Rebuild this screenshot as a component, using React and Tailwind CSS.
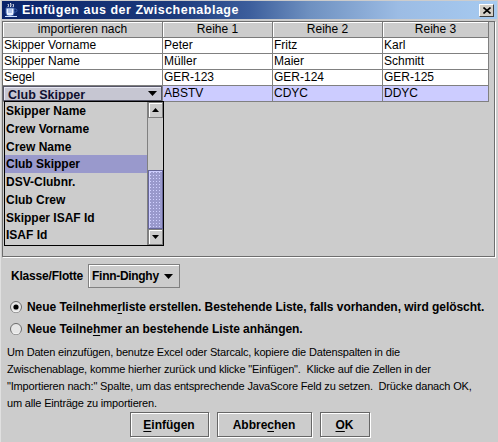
import React from "react";

const FONT = "font-['Liberation_Sans',Arial,sans-serif]";

const columns = [
  { title: "importieren nach", w: "w-[160px]" },
  { title: "Reihe 1", w: "w-[110px]" },
  { title: "Reihe 2", w: "w-[110px]" },
  { title: "Reihe 3", w: "w-[106px]" },
];

const rows = [
  ["Skipper Vorname", "Peter", "Fritz", "Karl"],
  ["Skipper Name", "Müller", "Maier", "Schmitt"],
  ["Segel", "GER-123", "GER-124", "GER-125"],
];

const listItems = [
  "Skipper Name",
  "Crew Vorname",
  "Crew Name",
  "Club Skipper",
  "DSV-Clubnr.",
  "Club Crew",
  "Skipper ISAF Id",
  "ISAF Id",
];

function DownArrow({ w = 9, h = 5 }) {
  return (
    <svg width={w} height={h} viewBox={`0 0 ${w} ${h}`}>
      <polygon points={`0,0 ${w},0 ${w / 2},${h}`} fill="#000" />
    </svg>
  );
}

function UpArrow({ w = 7, h = 4 }) {
  return (
    <svg width={w} height={h} viewBox={`0 0 ${w} ${h}`}>
      <polygon points={`0,${h} ${w},${h} ${w / 2},0`} fill="#000" />
    </svg>
  );
}

function TitleIcon() {
  return (
    <svg width="16" height="16" viewBox="0 0 16 16">
      <path d="M3 6 h8 v5 a3 3 0 0 1 -3 3 h-2 a3 3 0 0 1 -3 -3 z" fill="#e8f0ff" stroke="#3b5fa8" strokeWidth="1" />
      <path d="M11 7 h1.5 a1.5 1.5 0 0 1 0 3 h-1.5" fill="none" stroke="#3b5fa8" strokeWidth="1" />
      <path d="M5 2 q1 1.5 0 3 M7.5 1 q1 2 0 4 M10 2 q1 1.5 0 3" fill="none" stroke="#ffffff" strokeWidth="1" />
      <path d="M2 14.5 h12" stroke="#cfe0ff" strokeWidth="1" />
      <path d="M5 8 h4 M5 10 h4" stroke="#7a9ad8" strokeWidth="1" />
    </svg>
  );
}

function Radio({ checked }) {
  return (
    <svg width="12" height="12" viewBox="0 0 12 12">
      <circle cx="6" cy="6" r="5.5" fill="#e6e6e6" stroke="#6b6b6b" strokeWidth="1" />
      <path d="M2.5 9.5 a5 5 0 0 0 7 0" fill="none" stroke="#ffffff" strokeWidth="1" />
      {checked && <circle cx="6" cy="6" r="2.6" fill="#000" />}
    </svg>
  );
}

function Mn({ children }) {
  return <span className="underline underline-offset-2">{children}</span>;
}

function Button({ w, children }) {
  return (
    <button
      className={`${w} h-[25px] border border-[#666666] bg-[#cccccc] shadow-[inset_1px_1px_0_#ffffff,1px_1px_0_#ffffff] text-[12px] font-bold text-black flex items-center justify-center`}
    >
      {children}
    </button>
  );
}

export default function App() {
  return (
    <div
      className={`${FONT} relative w-[498px] h-[442px] overflow-hidden bg-[#cccccc] pt-[1px] border-l border-[#e0e0e0]`}
    >
      {/* title bar */}
      <div className="ml-[1px] mr-[1px] h-[18px] flex items-center justify-between bg-[linear-gradient(to_right,#0a246a_0%,#1c3a7c_35%,#3c5e9c_50%,#6e90c0_62%,#9cbce4_80%,#a6caf0_100%)]">
        <div className="flex items-center gap-[3px] pl-[1px]">
          <TitleIcon />
          <span className="text-[12.5px] font-bold text-white tracking-[0.5px]">
            Einfügen aus der Zwischenablage
          </span>
        </div>
        <div className="mr-[3px] w-[15px] h-[13px] bg-[#d4d0c8] border border-t-white border-l-white border-r-[#404040] border-b-[#404040] flex items-center justify-center">
          <svg width="8" height="7" viewBox="0 0 8 7">
            <path d="M0.5 0.5 L7.5 6.5 M7.5 0.5 L0.5 6.5" stroke="#000" strokeWidth="1.6" />
          </svg>
        </div>
      </div>

      {/* table scroll pane */}
      <div className="mt-[2px] ml-[1px] w-[493px] h-[236px] border border-[#6e6e6e] shadow-[1px_1px_0_#ffffff] bg-[#cccccc]">
        <div className="flex">
          {columns.map((c) => (
            <div
              key={c.title}
              className={`${c.w} h-[16px] border-r border-b border-[#7a7a7a] shadow-[inset_1px_1px_0_#ffffff] text-[12px] leading-[15px] text-center text-black`}
            >
              {c.title}
            </div>
          ))}
        </div>
        {rows.map((r) => (
          <div key={r[0]} className="flex">
            {r.map((v, i) => (
              <div
                key={i}
                className={`${columns[i].w} h-[16px] bg-white border-r border-b border-[#808080] text-[12px] leading-[15px] pl-[1px] text-black whitespace-nowrap overflow-hidden`}
              >
                {v}
              </div>
            ))}
          </div>
        ))}
        <div className="flex">
          <div className="w-[160px] h-[16px] border-r border-b border-[#808080] bg-[#cccccc]">
            <div className="h-[15px] border border-[#555566] bg-[#c6c6d2] shadow-[inset_1px_1px_0_#e8e8f4] flex items-start justify-between pl-[4px] pr-[4px] overflow-hidden">
              <span className="text-[12.5px] font-bold leading-[15px] mt-[1px] text-[#101030]">
                Club Skipper
              </span>
              <div className="mt-[4px]">
                <DownArrow />
              </div>
            </div>
          </div>
          {["ABSTV", "CDYC", "DDYC"].map((v, i) => (
            <div
              key={v}
              className={`${columns[i + 1].w} h-[16px] bg-[#ccccff] border-r border-b border-[#808080] text-[12px] leading-[15px] pl-[1px] text-black`}
            >
              {v}
            </div>
          ))}
        </div>
      </div>

      {/* dropdown popup over the table */}
      <div className="absolute left-[3px] top-[101px] w-[160px] h-[145px] border border-black bg-[#cccccc] flex">
        <div className="flex-1 overflow-hidden">
          {listItems.map((it) => (
            <div
              key={it}
              className={`h-[17.8px] flex items-center pl-[1px] text-[12px] font-bold text-black ${
                it === "Club Skipper" ? "bg-[#9999cc]" : ""
              }`}
            >
              {it}
            </div>
          ))}
        </div>
        <div className="w-[16px] flex flex-col border-l border-[#808080]">
          <div className="h-[16px] border border-[#808080] shadow-[inset_1px_1px_0_#ffffff] flex items-center justify-center">
            <UpArrow />
          </div>
          <div className="h-[52px]" />
          <div className="h-[59px] border border-[#666699] bg-[#9999cc] bg-[radial-gradient(circle,#d0d0ff_0.7px,transparent_1px)] bg-[length:3px_3px] shadow-[inset_1px_1px_0_#ccccff]" />
          <div className="flex-1 border border-[#808080] shadow-[inset_1px_1px_0_#ffffff] flex items-center justify-center">
            <DownArrow w={7} h={4} />
          </div>
        </div>
      </div>

      {/* Klasse/Flotte */}
      <div className="mt-[7px] pl-[10px] flex items-center gap-[5px]">
        <span className="text-[12px] font-bold text-black tracking-[-0.2px]">Klasse/Flotte</span>
        <div className="w-[92px] h-[24px] border border-[#808080] shadow-[inset_1px_1px_0_#ffffff] flex items-center justify-between pl-[3px] pr-[6px]">
          <span className="text-[12px] font-bold text-black tracking-[-0.3px]">Finn-Dinghy</span>
          <DownArrow />
        </div>
      </div>

      {/* radios */}
      <div className="mt-[8px] pl-[9px]">
        <div className="h-[22px] flex items-center gap-[5px]">
          <Radio checked />
          <span className="text-[12px] font-bold text-black whitespace-nowrap tracking-[-0.05px]">
            Neue Teilnehme<Mn>r</Mn>liste erstellen. Bestehende Liste, falls vorhanden, wird gelöscht.
          </span>
        </div>
        <div className="h-[22px] flex items-center gap-[5px]">
          <Radio />
          <span className="text-[12px] font-bold text-black whitespace-nowrap tracking-[-0.05px]">
            Neue Teilne<Mn>h</Mn>mer an bestehende Liste anhängen.
          </span>
        </div>
      </div>

      {/* help text */}
      <div className="mt-[4px] pl-[6px] text-[11px] leading-[17px] tracking-[-0.17px] text-black whitespace-pre">
        <div>Um Daten einzufügen, benutze Excel oder Starcalc, kopiere die Datenspalten in die</div>
        <div>Zwischenablage, komme hierher zurück und klicke "Einfügen".  Klicke auf die Zellen in der</div>
        <div>"Importieren nach:" Spalte, um das entsprechende JavaScore Feld zu setzen.  Drücke danach OK,</div>
        <div>um alle Einträge zu importieren.</div>
      </div>

      {/* buttons */}
      <div className="mt-0 flex justify-center gap-[8px]">
        <Button w="w-[79px]">
          <Mn>E</Mn>infügen
        </Button>
        <Button w="w-[95px]">
          Abbre<Mn>c</Mn>hen
        </Button>
        <Button w="w-[50px]">
          <Mn>O</Mn>K
        </Button>
      </div>
    </div>
  );
}
